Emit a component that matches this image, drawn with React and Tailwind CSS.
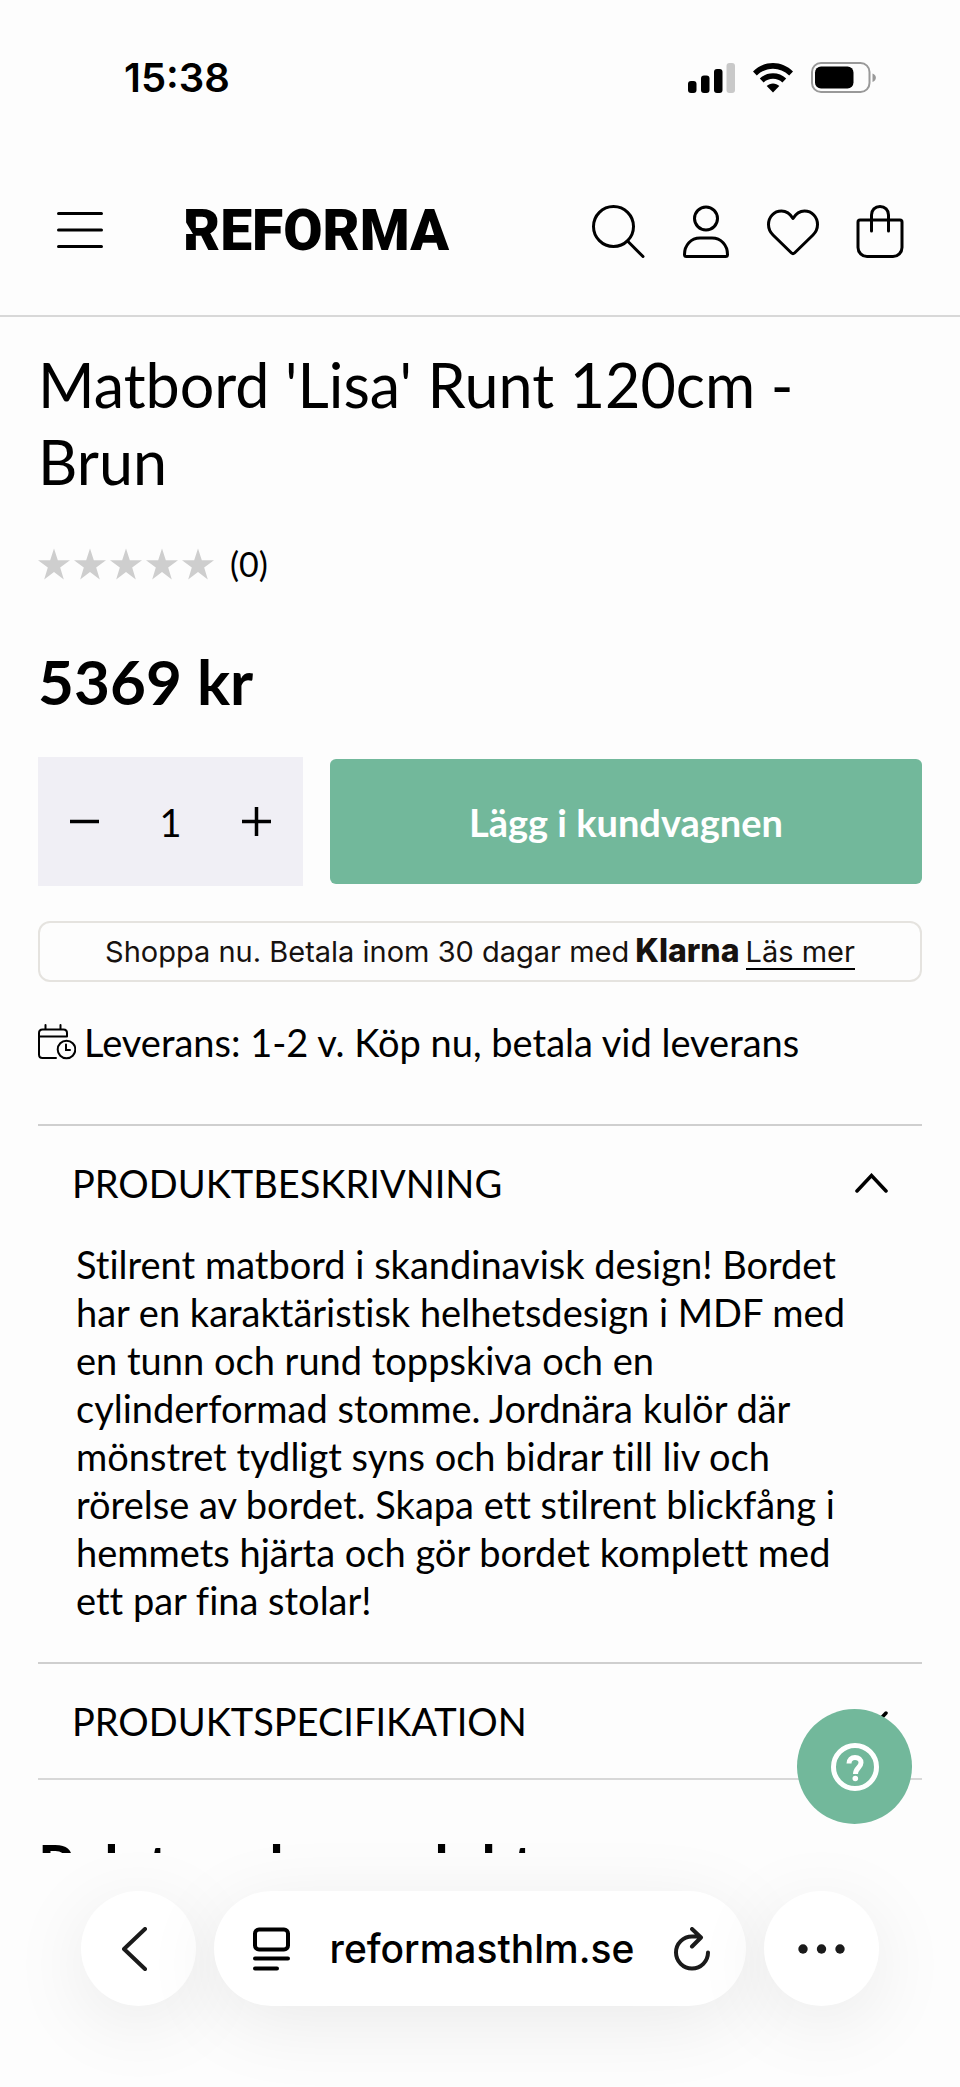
import { useState } from 'react';

const HEADER_ICONS = [
  {
    label: 'Sök',
    drawing: (
      <>
        <circle cx="21.5" cy="22.5" r="20" />
        <path d="M35.5 37 51 52.5" />
      </>
    ),
  },
  {
    label: 'Mitt konto',
    drawing: (
      <>
        <circle cx="27" cy="14.5" r="11.5" />
        <path d="M5.5 50.5c0-9.500 6.500-16.500 15.500-16.500h12c9 0 15.500 7 15.500 16.500 0 1.200-.8 2-2 2h-39c-1.200 0-2-.8-2-2z" />
      </>
    ),
  },
  {
    label: 'Favoriter',
    drawing: (
      <path d="M27 14.500C24 9.500 20.500 7 15.500 7 8 7 2.500 13 2.500 20.500c0 4.500 1.500 7.500 4.500 10.500l18.500 18c1 .9 2 .9 3 0L47 31c3-3 4.500-6 4.500-10.500C51.500 13 46 7 38.500 7 33.500 7 30 9.500 27 14.500z" />
    ),
  },
  {
    label: 'Varukorg',
    drawing: (
      <>
        <path d="M7 16h40c1.200 0 2 .8 2 2v25.500c0 5-4 9-9 9H14c-5 0-9-4-9-9V18c0-1.200.8-2 2-2z" />
        <path d="M18.500 27V11c0-5 3.500-8.500 8.500-8.500s8.500 3.500 8.500 8.500v16" />
      </>
    ),
  },
];

function StatusBar() {
  return (
    <div className="mt-[54px] flex h-12 items-center justify-between pr-[84px] pl-[124px]">
      <span className="font-['Inter',sans-serif] text-[40px] leading-[48px] font-semibold">15:38</span>
      <div className="flex items-center gap-[18px]">
        <svg width="47" height="30" viewBox="0 0 47 30" aria-hidden="true">
          <rect x="0" y="18" width="8.5" height="12" rx="3" />
          <rect x="13" y="12.5" width="8.5" height="17.5" rx="3" />
          <rect x="26" y="6" width="8.5" height="24" rx="3" />
          <rect x="38.5" y="0" width="8.5" height="30" rx="3" fill="#c9c9c9" />
        </svg>
        <svg width="40" height="30" viewBox="0 0 40 30" aria-hidden="true">
          <path d="M0 8.500C5.500 3 12.500 0 20 0s14.500 3 20 8.500l-3.800 4C31.500 8 26 5.700 20 5.700S8.500 8 3.800 12.500z" />
          <path d="M6.800 15.500C10.500 12 15 10.300 20 10.300s9.500 1.700 13.200 5.200l-3.800 4C26.800 17 23.500 15.800 20 15.800s-6.800 1.200-9.400 3.700z" />
          <path d="M13.700 23c1.700-1.600 3.900-2.500 6.300-2.500s4.600.9 6.300 2.500L20 29.500z" />
        </svg>
        <svg width="65" height="32" viewBox="0 0 65 32" aria-hidden="true">
          <rect x="1" y="1" width="57.5" height="29" rx="9" fill="none" stroke="#999" strokeWidth="2" />
          <rect x="4" y="4.5" width="38.5" height="22" rx="6" />
          <path d="M61.500 11.500c4.500 1.500 4.500 7 0 8.500z" fill="#999" />
        </svg>
      </div>
    </div>
  );
}

function Header() {
  return (
    <header className="flex items-center border-b-2 border-[#d8d8d8] pt-[102px] pr-[53px] pb-[57px] pl-[57px]">
      <button type="button" aria-label="Meny">
        <svg width="46" height="54" viewBox="0 0 46 54" stroke="#000" strokeWidth="3" strokeLinecap="round">
          <path d="M1.500 9.500h43M1.500 26h43M1.500 42.500h43" />
        </svg>
      </button>
      <a href="#" className="relative ml-20 font-['Roboto',sans-serif] text-[57px] leading-[54px] font-black">
        REFORMA
        {/* Snittet i R:ets stapel */}
        <svg
          width="12"
          height="54"
          viewBox="0 0 12 54"
          fill="#fdfdfd"
          aria-hidden="true"
          className="absolute top-0 left-0"
        >
          <path d="M0 15h1l9 15H0z" />
        </svg>
      </a>
      <div className="ml-auto flex gap-[33px]">
        {HEADER_ICONS.map(({ label, drawing }) => (
          <button key={label} type="button" aria-label={label}>
            <svg
              width="54"
              height="54"
              viewBox="0 0 54 54"
              fill="none"
              stroke="#000"
              strokeWidth="3"
              strokeLinecap="round"
              strokeLinejoin="round"
            >
              {drawing}
            </svg>
          </button>
        ))}
      </div>
    </header>
  );
}

function Rating() {
  return (
    <div className="mt-[42px] flex h-11 items-center gap-4">
      <div className="flex gap-1">
        {[1, 2, 3, 4, 5].map((n) => (
          <svg key={n} width="32" height="32" viewBox="0 0 31 30" fill="#cecece" aria-hidden="true">
            <path d="M15.500 0l3.700 11.300H31l-9.500 7L25 30l-9.500-7.200L6 30l3.500-11.700-9.500-7h11.800z" />
          </svg>
        ))}
      </div>
      <span className="text-[34px] leading-[44px]">(0)</span>
    </div>
  );
}

function Purchase() {
  const [qty, setQty] = useState(1);

  return (
    <div className="mt-[38px] flex items-center gap-[27px]">
      <div className="flex h-[129px] w-[265px] items-center bg-[#f0eff5] px-8">
        <button type="button" aria-label="Minska antal" onClick={() => setQty(Math.max(1, qty - 1))}>
          <svg width="29" height="29" viewBox="0 0 29 29" stroke="#000" strokeWidth="3.5">
            <path d="M0 14.500h29" />
          </svg>
        </button>
        <input
          type="text"
          aria-label="Antal"
          value={qty}
          onChange={(e) => setQty(Number(e.target.value) || 1)}
          className="w-full min-w-0 flex-1 text-center text-[38px] leading-[48px] outline-none"
        />
        <button type="button" aria-label="Öka antal" onClick={() => setQty(qty + 1)}>
          <svg width="29" height="29" viewBox="0 0 29 29" stroke="#000" strokeWidth="3.5">
            <path d="M0 14.500h29M14.500 0v29" />
          </svg>
        </button>
      </div>
      <button
        type="button"
        className="h-[125px] flex-1 rounded-md bg-[#72b89b] text-[38px] leading-[48px] font-bold text-white"
      >
        Lägg i kundvagnen
      </button>
    </div>
  );
}

function AccordionItem({ title, open, onToggle, children }) {
  return (
    <section className="border-t-2 border-[#cfcfcf]">
      <h2>
        <button
          type="button"
          aria-expanded={open}
          onClick={onToggle}
          className="flex w-full items-center justify-between px-[34px] py-[33px] text-left text-[38px] leading-[48px]"
        >
          {title}
          <svg
            width="33"
            height="20"
            viewBox="0 0 33 20"
            fill="none"
            stroke="#000"
            strokeWidth="3.5"
            strokeLinecap="round"
            className={open ? '' : 'rotate-180'}
          >
            <path d="M2 18 16.500 2.500 31 18" />
          </svg>
        </button>
      </h2>
      {open && (
        <div className="px-[38px] pb-[38px] text-[38px] leading-[48px] [font-variant-ligatures:none]">{children}</div>
      )}
    </section>
  );
}

function BrowserBar() {
  return (
    <nav className="flex gap-[18px] px-[81px] pt-[38px] pb-[81px]">
      <button
        type="button"
        aria-label="Tillbaka"
        className="flex size-[115px] items-center justify-center rounded-full bg-white shadow-[0_16px_80px_rgba(0,0,0,0.08)]"
      >
        <svg
          width="34"
          height="44"
          viewBox="0 0 34 44"
          fill="none"
          stroke="#1a1a1a"
          strokeWidth="4"
          strokeLinecap="round"
          strokeLinejoin="round"
        >
          <path d="M23 2 2 22l21 20" />
        </svg>
      </button>
      <div className="flex h-[115px] flex-1 items-center justify-between rounded-full bg-white pr-9 pl-[39px] shadow-[0_16px_80px_rgba(0,0,0,0.08)]">
        <button type="button" aria-label="Sidmeny">
          <svg width="37" height="44" viewBox="0 0 37 44" fill="none" stroke="#000" strokeWidth="4" strokeLinecap="round">
            <rect x="2" y="2.5" width="33" height="20" rx="4" />
            <path d="M2 31.500h33M2 41.500h22" />
          </svg>
        </button>
        <span className="font-['Inter',sans-serif] text-[39px] leading-[48px] font-medium">reformasthlm.se</span>
        <button type="button" aria-label="Ladda om">
          <svg
            width="36"
            height="44"
            viewBox="0 0 36 44"
            fill="none"
            stroke="#1a1a1a"
            strokeWidth="4"
            strokeLinecap="round"
            strokeLinejoin="round"
          >
            <path d="M34 25.500A16 16 0 1 1 18 9.500h8M18 2l9 8.500-9 9" />
          </svg>
        </button>
      </div>
      <button
        type="button"
        aria-label="Mer"
        className="flex size-[115px] items-center justify-center rounded-full bg-white shadow-[0_16px_80px_rgba(0,0,0,0.08)]"
      >
        <svg width="47" height="10" viewBox="0 0 47 10" fill="#1a1a1a">
          <circle cx="5" cy="5" r="4.7" />
          <circle cx="23.5" cy="5" r="4.7" />
          <circle cx="42" cy="5" r="4.7" />
        </svg>
      </button>
    </nav>
  );
}

export default function App() {
  const [descOpen, setDescOpen] = useState(true);
  const [specOpen, setSpecOpen] = useState(false);

  return (
    <div className="flex h-screen flex-col bg-[#fdfdfd] font-['Lato',sans-serif] text-black">
      <div className="relative min-h-0 flex-1 overflow-hidden">
        <StatusBar />
        <Header />

        <main className="px-[38px] pt-[29px]">
          <h1 className="text-[61px] leading-[77px]">Matbord 'Lisa' Runt 120cm - Brun</h1>
          <Rating />
          <p className="mt-[57px] text-[62px] leading-[76px] font-bold">5369 kr</p>
          <Purchase />

          {/* Klarna */}
          <div className="mt-[35px] rounded-xl border-2 border-[#e5e3df] py-1 font-['Inter',sans-serif] text-[29px] leading-[48px] text-[#17120f]">
            <div className="flex items-baseline justify-center gap-1.5">
              <span>Shoppa nu. Betala inom 30 dagar med</span>
              <span className="text-[32px] font-extrabold">Klarna</span>
              <a href="#" className="border-b-2 border-black leading-8">
                Läs mer
              </a>
            </div>
          </div>

          {/* Leverans */}
          <div className="mt-9 flex items-center gap-2 text-[38px] leading-[48px]">
            <svg
              width="38"
              height="36"
              viewBox="0 0 38 36"
              fill="none"
              stroke="#000"
              strokeWidth="2"
              strokeLinecap="round"
              className="shrink-0"
            >
              <path d="M18 34H4.500C2.500 34 1 32.500 1 30.500V9c0-2 1.500-3.500 3.500-3.500h21C27.500 5.500 29 7 29 9v3.500M1 12.500h28M7.500 1v4.500M22.500 1v4.500" />
              <circle cx="28.500" cy="25.5" r="8.800" />
              <path d="M28 20.500v5.500h4" />
            </svg>
            <p>Leverans: 1-2 v. Köp nu, betala vid leverans</p>
          </div>

          <div className="mt-[58px] border-b-2 border-[#d8d8d8]">
            <AccordionItem title="PRODUKTBESKRIVNING" open={descOpen} onToggle={() => setDescOpen(!descOpen)}>
              Stilrent matbord i skandinavisk design! Bordet har en karaktäristisk helhetsdesign i MDF med en tunn och
              rund toppskiva och en cylinderformad stomme. Jordnära kulör där mönstret tydligt syns och bidrar till liv
              och rörelse av bordet. Skapa ett stilrent blickfång i hemmets hjärta och gör bordet komplett med ett par
              fina stolar!
            </AccordionItem>
            <AccordionItem title="PRODUKTSPECIFIKATION" open={specOpen} onToggle={() => setSpecOpen(!specOpen)} />
          </div>

          <h2 className="mt-[46px] text-[58px] leading-[77px] font-bold">Relaterade produkter</h2>
        </main>

        {/* Hjälpknapp */}
        <button
          type="button"
          aria-label="Hjälp"
          className="absolute right-12 bottom-[29px] flex size-[115px] items-center justify-center rounded-full bg-[#72b89b]"
        >
          <svg width="48" height="48" viewBox="0 0 48 48" fill="none" stroke="#fff" strokeWidth="5">
            <circle cx="24" cy="24" r="21.5" />
            <path d="M18 20.500c0-3.800 2.500-6 6-6s6 2.200 6 5.300c0 4.500-5.500 5-5.500 11.200" />
            <circle cx="24.3" cy="35.5" r="2.8" fill="#fff" stroke="none" />
          </svg>
        </button>
      </div>
      <BrowserBar />
    </div>
  );
}
